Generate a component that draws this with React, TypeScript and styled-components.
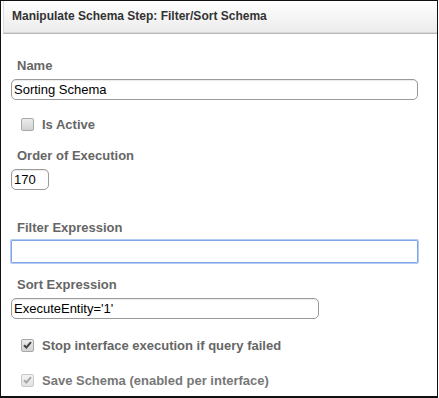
import React from "react";
import styled, { createGlobalStyle } from "styled-components";

const Global = createGlobalStyle`
  html, body { margin: 0; padding: 0; background: #fff; }
  body { font-family: "Liberation Sans", Arial, sans-serif; }
`;

const Frame = styled.div`
  box-sizing: border-box;
  width: 438px;
  height: 398px;
  border: 1px solid #111;
  border-bottom-width: 2px;
  background: #fff;
  display: flex;
  flex-direction: column;
`;

const Header = styled.div`
  box-sizing: border-box;
  height: 32px;
  margin-left: 2px;
  border-left: 1px solid #dcdcdc;
  border-bottom: 1px solid #d8d8d8;
  box-shadow: 0 1px 0 #b9b9b9;
  background: linear-gradient(to bottom, #ffffff 0%, #f7f7f7 40%, #ececec 100%);
  display: flex;
  align-items: center;
  padding-left: 8px;
  padding-bottom: 1px;
  font-size: 12px;
  font-weight: bold;
  color: #333;
`;

const Body = styled.div`
  display: flex;
  flex-direction: column;
  padding-top: 1px;
`;

const Label = styled.div<{ $top: number }>`
  margin-top: ${(p) => p.$top}px;
  padding-left: 16px;
  font-size: 13px;
  line-height: 16px;
  font-weight: bold;
  color: #666;
`;

const TextInput = styled.div<{ $width: number; $focused?: boolean; $gap: number }>`
  box-sizing: border-box;
  margin-top: ${(p) => p.$gap}px;
  margin-left: 10px;
  width: ${(p) => p.$width}px;
  height: ${(p) => (p.$focused ? 23 : 21)}px;
  border: 1px solid ${(p) => (p.$focused ? "#7fa6e4" : "#9a9a9a")};
  border-radius: ${(p) => (p.$focused ? 1 : 5)}px;
  box-shadow: ${(p) => (p.$focused ? "0 0 0 1px #b4ccf2" : "inset 0 1px 1px rgba(0,0,0,0.08)")};
  padding-left: 2px;
  display: flex;
  align-items: center;
  font-size: 13px;
  color: #000;
  white-space: nowrap;
`;

const CheckRow = styled.div<{ $top: number }>`
  margin-top: ${(p) => p.$top}px;
  padding-left: 20px;
  height: 16px;
  display: flex;
  align-items: center;
  gap: 8px;
  font-size: 13px;
  font-weight: bold;
  color: #666;
`;

const Box = styled.span<{ $disabled?: boolean }>`
  box-sizing: border-box;
  width: 13px;
  height: 13px;
  border: 1px solid ${(p) => (p.$disabled ? "#c8c8c8" : "#a8a8a8")};
  border-radius: 2px;
  background: ${(p) =>
    p.$disabled
      ? "linear-gradient(to bottom, #f4f4f4, #e2e2e2)"
      : "linear-gradient(to bottom, #ececec, #d2d2d2)"};
  display: flex;
  align-items: center;
  justify-content: center;
`;

const CheckLabel = styled.span<{ $muted?: boolean }>`
  color: ${(p) => (p.$muted ? "#777" : "#666")};
`;

const Check = ({ color }: { color: string }) => (
  <svg width="9" height="8" viewBox="0 0 9 8">
    <path d="M1 4.2 L3.4 6.5 L8 1.2" stroke={color} strokeWidth="2" fill="none" />
  </svg>
);

export default function App() {
  return (
    <>
      <Global />
      <Frame>
        <Header>Manipulate Schema Step: Filter/Sort Schema</Header>
        <Body>
          <Label $top={24}>Name</Label>
          <TextInput $width={407} $gap={5}>Sorting Schema</TextInput>
          <CheckRow $top={16}>
            <Box />
            <CheckLabel>Is Active</CheckLabel>
          </CheckRow>
          <Label $top={16}>Order of Execution</Label>
          <TextInput $width={38} $gap={5}>170</TextInput>
          <Label $top={30}>Filter Expression</Label>
          <TextInput $width={407} $gap={4} $focused />
          <Label $top={14}>Sort Expression</Label>
          <TextInput $width={308} $gap={5}>ExecuteEntity='1'</TextInput>
          <CheckRow $top={18}>
            <Box>
              <Check color="#444" />
            </Box>
            <CheckLabel>Stop interface execution if query failed</CheckLabel>
          </CheckRow>
          <CheckRow $top={19}>
            <Box $disabled>
              <Check color="#a8a8a8" />
            </Box>
            <CheckLabel $muted>Save Schema (enabled per interface)</CheckLabel>
          </CheckRow>
        </Body>
      </Frame>
    </>
  );
}
